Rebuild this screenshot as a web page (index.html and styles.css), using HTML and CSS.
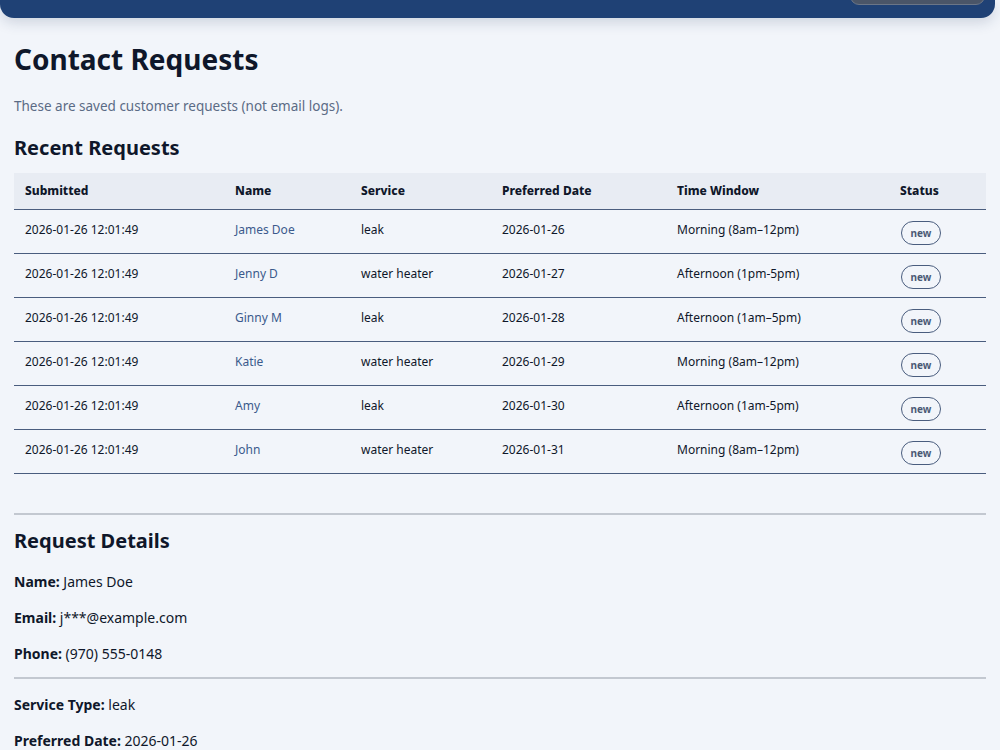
FILE: index.html
```html
<!DOCTYPE html>
<html lang="en">
<head>
    <meta charset="UTF-8">
    <meta name="viewport" content="width=device-width, initial-scale=1.0">
    <title>Contact Requests</title>
    <link rel="stylesheet" href="styles.css">
</head>
<body>
    <div class="topbar">
        <button class="top-btn" aria-label="Log out"></button>
    </div>
    <div id="main-container">
        <h1 class="page-title">Contact Requests</h1>
        <p class="subtitle">These are saved customer requests (not email logs).</p>

        <h2 class="section-title">Recent Requests</h2>
        <table class="requests">
            <thead>
                <tr>
                    <th class="c-sub">Submitted</th>
                    <th class="c-name">Name</th>
                    <th class="c-svc">Service</th>
                    <th class="c-date">Preferred Date</th>
                    <th class="c-time">Time Window</th>
                    <th class="c-status">Status</th>
                </tr>
            </thead>
            <tbody>
                <tr>
                    <td>2026-01-26 12:01:49</td>
                    <td><a href="#">James Doe</a></td>
                    <td>leak</td>
                    <td>2026-01-26</td>
                    <td>Morning (8am–12pm)</td>
                    <td><span class="badge">new</span></td>
                </tr>
                <tr>
                    <td>2026-01-26 12:01:49</td>
                    <td><a href="#">Jenny D</a></td>
                    <td>water heater</td>
                    <td>2026-01-27</td>
                    <td>Afternoon (1pm-5pm)</td>
                    <td><span class="badge">new</span></td>
                </tr>
                <tr>
                    <td>2026-01-26 12:01:49</td>
                    <td><a href="#">Ginny M</a></td>
                    <td>leak</td>
                    <td>2026-01-28</td>
                    <td>Afternoon (1am–5pm)</td>
                    <td><span class="badge">new</span></td>
                </tr>
                <tr>
                    <td>2026-01-26 12:01:49</td>
                    <td><a href="#">Katie</a></td>
                    <td>water heater</td>
                    <td>2026-01-29</td>
                    <td>Morning (8am–12pm)</td>
                    <td><span class="badge">new</span></td>
                </tr>
                <tr>
                    <td>2026-01-26 12:01:49</td>
                    <td><a href="#">Amy</a></td>
                    <td>leak</td>
                    <td>2026-01-30</td>
                    <td>Afternoon (1am-5pm)</td>
                    <td><span class="badge">new</span></td>
                </tr>
                <tr>
                    <td>2026-01-26 12:01:49</td>
                    <td><a href="#">John</a></td>
                    <td>water heater</td>
                    <td>2026-01-31</td>
                    <td>Morning (8am–12pm)</td>
                    <td><span class="badge">new</span></td>
                </tr>
            </tbody>
        </table>

        <hr class="divider first">

        <h2 class="section-title details-title">Request Details</h2>
        <p class="detail"><b>Name:</b> James Doe</p>
        <p class="detail"><b>Email:</b> j***@example.com</p>
        <p class="detail"><b>Phone:</b> (970) 555-0148</p>
        <hr class="divider mid">
        <p class="detail"><b>Service Type:</b> leak</p>
        <p class="detail"><b>Preferred Date:</b> 2026-01-26</p>
    </div>
</body>
</html>
```

FILE: styles.css
```css
body {
    margin: 0;
    background-color: #f2f5fa;
    font-family: "Noto Sans", "Open Sans", sans-serif;
    color: #0f172a;
}
.topbar {
    height: 18px;
    margin-right: 5px;
    background-color: #1f4175;
    border-radius: 0 0 14px 14px;
    box-shadow: 0 4px 14px rgba(30, 50, 90, 0.18);
    display: flex;
    justify-content: flex-end;
    align-items: flex-end;
    padding: 0 10px 13px 0;
    box-sizing: border-box;
}
.top-btn {
    width: 135px;
    height: 34px;
    flex-shrink: 0;
    background-color: #4a5568;
    border: 1px solid #6b7586;
    border-radius: 9px;
}
#main-container {
    padding: 0 14px;
}
.page-title {
    margin: 22px 0 0 0;
    font-size: 28px;
    line-height: 38px;
    font-weight: 700;
}
.subtitle {
    margin: 18px 0 0 0;
    font-size: 13.5px;
    line-height: 20px;
    color: #5b6b85;
}
.section-title {
    margin: 18px 0 0 0;
    font-size: 20px;
    line-height: 28px;
    font-weight: 700;
}
.requests {
    width: 100%;
    margin-top: 11px;
    border-collapse: collapse;
    font-size: 12px;
    table-layout: fixed;
}
.requests th,
.requests td {
    box-sizing: border-box;
    padding: 0 11px;
    border-bottom: 1px solid #4a5d7e;
}
.requests th {
    background-color: #e8ecf3;
    text-align: left;
    font-weight: 800;
    height: 36px;
}
.requests td {
    height: 44px;
    padding-bottom: 4px;
}
.requests a {
    color: #3b5a8c;
    text-decoration: none;
}
.c-sub { width: 210px; }
.c-name { width: 126px; }
.c-svc { width: 141px; }
.c-date { width: 175px; }
.c-time { width: 223px; }
.badge {
    display: inline-block;
    margin-top: 7px;
    margin-left: 1px;
    width: 40px;
    height: 24px;
    line-height: 23px;
    box-sizing: border-box;
    text-align: center;
    border: 1.5px solid #4a5d7e;
    border-radius: 12px;
    font-size: 10px;
    font-weight: 700;
    color: #4a5a75;
}
.divider {
    border: none;
    border-top: 2px solid #c3c8d0;
    margin: 0;
}
.divider.first {
    margin-top: 39px;
}
.divider.mid {
    margin-top: 11px;
}
.details-title {
    margin-top: 12px;
}
.detail {
    margin: 12px 0 0 0;
    font-size: 14px;
    line-height: 24px;
}
.details-title + .detail {
    margin-top: 15px;
}
.divider + .detail {
    margin-top: 14px;
}
.detail b {
    font-weight: 700;
}
```
